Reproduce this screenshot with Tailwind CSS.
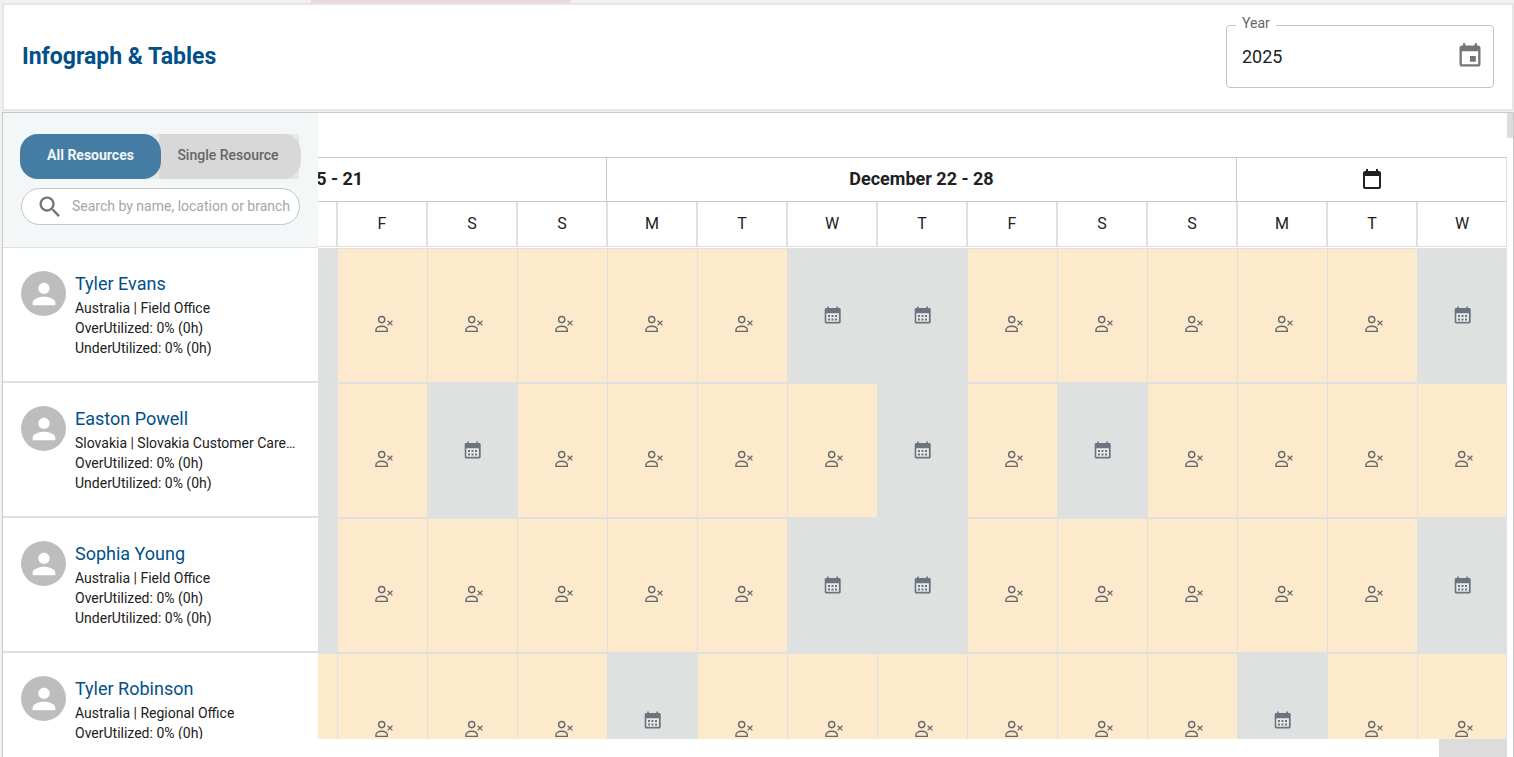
<!DOCTYPE html>
<html lang="en">
<head>
  <meta charset="UTF-8">
  <meta name="viewport" content="width=device-width, initial-scale=1.0">
  <title>Infograph &amp; Tables</title>
  <script src="https://cdn.jsdelivr.net/npm/@tailwindcss/browser@4"></script>
</head>
<body class="flex h-screen flex-col overflow-hidden bg-[#f1f1f1] pl-0.5 font-[Roboto,sans-serif] text-[#212121]">
  <!-- Icons -->
  <svg class="hidden">
    <symbol id="icon-person" viewBox="0 0 24 24">
      <path fill="currentColor" d="M12 12c2.21 0 4-1.79 4-4s-1.79-4-4-4-4 1.79-4 4 1.79 4 4 4zm0 2c-2.67 0-8 1.34-8 4v2h16v-2c0-2.66-5.33-4-8-4z"/>
    </symbol>
    <symbol id="icon-free" viewBox="0 0 23 19">
      <g fill="none" stroke="currentColor" stroke-width="1.4">
        <circle cx="10.7" cy="5.6" r="3.1"/>
        <path d="M4.9 17.4v-1.1c0-2.7 2.4-4 5.7-4s5.7 1.3 5.7 4v1.1z" stroke-linejoin="round"/>
        <path d="M16.6 6.7l4.8 4.7M21.4 6.7l-4.8 4.7" stroke-width="1.2"/>
      </g>
    </symbol>
    <symbol id="icon-leave" viewBox="0 0 17 19">
      <path fill="#e9ebeb" d="M2.5 7h12.5v9h-12.5z"/>
      <path fill="currentColor" fill-rule="evenodd" d="M3.2 .5h1.6V2h7.6V.5h1.6V2h1.3c.8 0 1.4.6 1.4 1.4v12.6c0 .8-.6 1.4-1.4 1.4H2.1c-.8 0-1.4-.6-1.4-1.4V3.400c0-.8.6-1.400 1.400-1.400h1.100zM2.300 7.300v8.500h12.600V7.300z"/>
      <path fill="currentColor" d="M4 9h2v2H4zM7.500 9h2v2h-2zM11 9h2v2h-2zM4 12.500h2v2H4zM7.500 12.500h2v2h-2zM11 12.500h2v2h-2z"/>
    </symbol>
  </svg>

  <div class="h-[3px] shrink-0 pl-[309px]">
    <div class="h-full w-[260px] bg-[#ecd9d9]"></div>
  </div>

  <header class="mb-px flex h-[108px] shrink-0 items-center justify-between border-2 border-[#e5e5e5] bg-white pr-[18px] pb-0.5 pl-[18px]">
    <h1 class="pt-0.5 text-[23px] leading-8 font-bold text-[#01508a]">Infograph &amp; Tables</h1>
    <div class="relative flex h-[63px] w-[268px] items-center rounded border border-[#c4c4c4] pr-[9px] pl-[15px]">
      <label for="year" class="absolute -top-[13px] left-[9px] bg-white px-1.5 text-sm leading-5 text-[#666666]">Year</label>
      <input id="year" type="text" value="2025" class="min-w-0 flex-1 pt-0.5 text-lg outline-none">
      <button type="button" aria-label="Choose year" class="text-[#757575]">
        <svg class="size-7" viewBox="0 0 24 24" fill="currentColor"><path d="M17 12h-5v5h5v-5zM16 1v2H8V1H6v2H5c-1.11 0-1.99.9-1.99 2L3 19c0 1.1.89 2 2 2h14c1.1 0 2-.9 2-2V5c0-1.1-.9-2-2-2h-1V1h-2zm3 18H5V8h14v11z"/></svg>
      </button>
    </div>
  </header>

  <main class="flex min-h-0 flex-1 border-x border-t border-[#c8c8c8] bg-white">
    <div class="flex min-w-0 flex-1 flex-col">
      <div class="flex min-h-0 flex-1 overflow-hidden">
        <!-- Resources -->
        <aside class="w-[315px] shrink-0">
          <div class="h-[135px] border-b border-[#dfe1e1] bg-[#f3f7f8] pt-[21px] pr-[18px] pl-[17px]">
            <div class="mr-px flex h-[45px] rounded-l-[18px] bg-[#e6e7e6] text-sm font-medium">
              <button type="button" class="z-10 w-[141px] rounded-[18px] bg-[#447ca4] pb-1 font-bold text-[#f1f5f8]">All Resources</button>
              <button type="button" class="-mr-0.5 -ml-0.5 flex-1 rounded-r-[18px] bg-[#d7d8d7] pr-1 pb-1 text-[#666666]">Single Resource</button>
            </div>
            <div class="mt-[9px] ml-px flex h-[37px] items-center rounded-full border border-[#c4c4c4] bg-white pl-[14px]">
              <svg class="size-7 shrink-0 text-[#757575]" viewBox="0 0 24 24" fill="currentColor"><path d="M15.5 14h-.79l-.28-.27C15.41 12.59 16 11.11 16 9.5 16 5.91 13.09 3 9.5 3S3 5.91 3 9.5 5.91 16 9.5 16c1.61 0 3.09-.59 4.23-1.57l.27.28v.79l5 4.99L20.49 19l-4.99-5zm-6 0C7.01 14 5 11.99 5 9.5S7.01 5 9.5 5 14 7.01 14 9.5 11.99 14 9.5 14z"/></svg>
              <input type="text" aria-label="Search resources" placeholder="Search by name, location or branch" class="ml-2 min-w-0 flex-1 pb-0.5 text-sm outline-none placeholder:text-[#a6a6a6]">
            </div>
          </div>
          <ul id="resources"></ul>
        </aside>

        <!-- Timeline -->
        <section class="min-w-0 flex-1 overflow-hidden">
          <div class="mt-11 flex justify-end border-t border-r border-t-[#c8c8c8] border-r-[#dfe1e1]">
            <table class="w-[1260px] shrink-0 table-fixed border-separate border-spacing-0">
              <thead>
                <tr class="h-11 text-lg font-bold">
                  <th colspan="4" class="border-b border-[#c8c8c8] p-0"><div class="-ml-[270px] pb-0.5">December 15 - 21</div></th>
                  <th colspan="7" class="border-b border-l border-[#c8c8c8] p-0 pb-0.5">December 22 - 28</th>
                  <th colspan="3" class="border-b border-l border-[#c8c8c8] p-0">
                    <svg class="mx-auto size-6" viewBox="0 0 24 24" fill="currentColor" role="img" aria-label="Next week"><path d="M19 3h-1V1h-2v2H8V1H6v2H5c-1.11 0-1.99.9-1.99 2L3 19c0 1.1.89 2 2 2h14c1.1 0 2-.9 2-2V5c0-1.1-.9-2-2-2zm0 16H5V8h14v11z"/></svg>
                  </th>
                </tr>
                <tr id="days" class="h-[45px]"></tr>
              </thead>
            </table>
          </div>
          <div class="mt-px flex justify-end border-t border-[#dfe1e1]">
            <table class="w-[1260px] shrink-0 table-fixed border-separate border-spacing-0">
              <tbody id="schedule"></tbody>
            </table>
          </div>
        </section>
      </div>
      <div class="flex h-[18px] shrink-0 justify-end"><div class="w-[68px] bg-[#dcdcdc]"></div></div>
    </div>
    <div class="w-1.5 shrink-0"><div class="h-[25px] bg-[#dcdcdc]"></div></div>
  </main>

  <script>
    const days = ['T', 'F', 'S', 'S', 'M', 'T', 'W', 'T', 'F', 'S', 'S', 'M', 'T', 'W'];

    // one letter per day: F = free, L = leave
    const resources = [
      { name: 'Tyler Evans', location: 'Australia | Field Office', plan: 'LFFFFFLLFFFFFL' },
      { name: 'Easton Powell', location: 'Slovakia | Slovakia Customer Care Office', plan: 'LFLFFFFLFLFFFF' },
      { name: 'Sophia Young', location: 'Australia | Field Office', plan: 'LFFFFFLLFFFFFL' },
      { name: 'Tyler Robinson', location: 'Australia | Regional Office', plan: 'FFFFLFFFFFFLFF' },
    ];

    const freeCell = `
      <td class="border-b-2 border-l border-[#dfe1e1] bg-[#fdeacd] p-0 last:border-r">
        <svg class="mx-auto mt-4 h-[19px] w-[23px] text-[#66676b]" role="img" aria-label="Free"><use href="#icon-free"/></svg>
      </td>`;
    const leaveCell = `
      <td class="border-b-2 border-l border-[#dfe1e1] bg-[#dfe1e1] p-0 last:border-r">
        <svg class="mx-auto h-[19px] w-[17px] text-[#6c757f]" role="img" aria-label="Leave"><use href="#icon-leave"/></svg>
      </td>`;

    document.getElementById('days').innerHTML = days.map(d => `
      <th class="border-b border-l-2 border-[#dfe1e1] p-0 font-normal">${d}</th>
    `).join('');

    document.getElementById('resources').innerHTML = resources.map(r => `
      <li class="flex h-[135px] gap-[9px] border-b-2 border-[#dfe1e1] pt-[22px] pr-5 pl-[18px]">
        <div class="mt-px flex size-[45px] shrink-0 items-center justify-center rounded-full bg-[#bdbdbd] text-white">
          <svg class="size-[34px]"><use href="#icon-person"/></svg>
        </div>
        <div class="min-w-0 text-sm leading-5">
          <a href="#" class="block text-lg leading-7 text-[#01508a]">${r.name}</a>
          <p class="truncate">${r.location}</p>
          <p>OverUtilized: 0% (0h)</p>
          <p>UnderUtilized: 0% (0h)</p>
        </div>
      </li>
    `).join('');

    document.getElementById('schedule').innerHTML = resources.map(r => `
      <tr class="h-[135px]">${[...r.plan].map(c => c === 'F' ? freeCell : leaveCell).join('')}</tr>
    `).join('');
  </script>
</body>
</html>
